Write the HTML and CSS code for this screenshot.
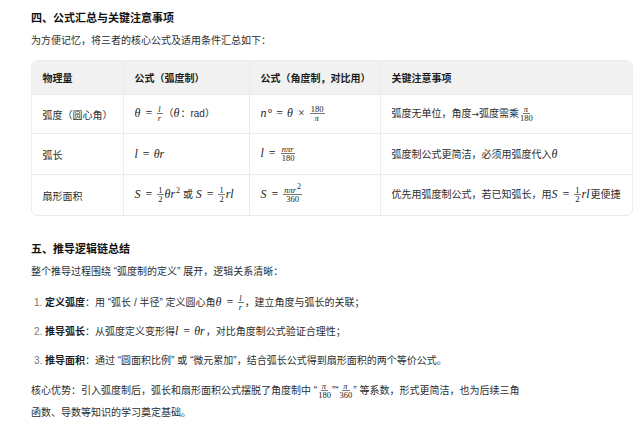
FILE: index.html
```html
<!DOCTYPE html>
<html lang="zh">
<head>
<meta charset="utf-8">
<title>公式汇总</title>
<link rel="stylesheet" href="styles.css">
</head>
<body>
<h3 class="h h1">四、公式汇总与关键注意事项</h3>
<p class="p intro">为方便记忆，将三者的核心公式及适用条件汇总如下：</p>
<div class="tablewrap">
<table class="tbl">
<colgroup><col class="c1"><col class="c2"><col class="c3"><col class="c4"></colgroup>
<thead>
<tr><th>物理量</th><th>公式（弧度制）</th><th>公式（角度制，对比用）</th><th>关键注意事项</th></tr>
</thead>
<tbody>
<tr class="r1">
<td>弧度（圆心角）</td>
<td><span class="m"><i>θ</i><span class="o">=</span><span class="f"><span class="n"><i>l</i></span><span class="d"><i>r</i></span></span></span>（<span class="m"><i>θ</i></span>：rad）</td>
<td><span class="m"><i>n</i>°<span class="o">=</span><i>θ</i><span class="o">×</span><span class="f"><span class="n">180</span><span class="d"><i>π</i></span></span></span></td>
<td>弧度无单位，角度<span class="arrow">→</span>弧度需乘<span class="m"><span class="f"><span class="n"><i>π</i></span><span class="d">180</span></span></span></td>
</tr>
<tr class="r2">
<td>弧长</td>
<td><span class="m"><i>l</i><span class="o">=</span><i>θr</i></span></td>
<td><span class="m"><i>l</i><span class="o">=</span><span class="f"><span class="n"><i>nπr</i></span><span class="d">180</span></span></span></td>
<td>弧度制公式更简洁，必须用弧度代入<span class="m"><i>θ</i></span></td>
</tr>
<tr class="r3">
<td>扇形面积</td>
<td><span class="m"><i>S</i><span class="o">=</span><span class="f"><span class="n">1</span><span class="d">2</span></span><i>θr</i><sup>2</sup></span> 或 <span class="m"><i>S</i><span class="o">=</span><span class="f"><span class="n">1</span><span class="d">2</span></span><i>rl</i></span></td>
<td><span class="m"><i>S</i><span class="o">=</span><span class="f"><span class="n"><i>nπr</i><sup>2</sup></span><span class="d">360</span></span></span></td>
<td>优先用弧度制公式，若已知弧长，用<span class="m"><i>S</i><span class="o">=</span><span class="f"><span class="n">1</span><span class="d">2</span></span><i>rl</i></span>更便捷</td>
</tr>
</tbody>
</table>
</div>
<h3 class="h h2">五、推导逻辑链总结</h3>
<p class="p intro2">整个推导过程围绕 “弧度制的定义” 展开，逻辑关系清晰：</p>
<ol class="list">
<li><b>定义弧度</b>：用 “弧长 / 半径” 定义圆心角<span class="m"><i>θ</i><span class="o">=</span><span class="f"><span class="n"><i>l</i></span><span class="d"><i>r</i></span></span></span>，建立角度与弧长的关联；</li>
<li><b>推导弧长</b>：从弧度定义变形得<span class="m"><i>l</i><span class="o">=</span><i>θr</i></span>，对比角度制公式验证合理性；</li>
<li><b>推导面积</b>：通过 “圆面积比例” 或 “微元累加”，结合弧长公式得到扇形面积的两个等价公式。</li>
</ol>
<p class="p core">核心优势：引入弧度制后，弧长和扇形面积公式摆脱了角度制中 <span class="q">“</span><span class="m"><span class="f"><span class="n"><i>π</i></span><span class="d">180</span></span></span><span class="q">”“</span><span class="m"><span class="f"><span class="n"><i>π</i></span><span class="d">360</span></span></span><span class="q">”</span> 等系数，形式更简洁，也为后续三角函数、导数等知识的学习奠定基础。</p>
</body>
</html>
```
FILE: styles.css
```css
html, body { margin: 0; padding: 0; background: #fff; }
body {
  width: 640px;
  height: 427px;
  overflow: hidden;
  box-sizing: border-box;
  padding: 11px 8px 0 31px;
  font-family: "Liberation Sans", "Noto Sans CJK SC", sans-serif;
  font-size: 10px;
  color: #2e2e2e;
}
.h { margin: 0; font-size: 11px; line-height: 14px; font-weight: 700; color: #111; }
.p { margin: 0; line-height: 20px; }
.intro { margin-top: 6px; }
.tablewrap {
  margin-top: 9px;
  border: 1px solid #ececec;
  border-radius: 7px;
  overflow: hidden;
  width: 600px;
}
.tbl { border-collapse: collapse; table-layout: fixed; width: 600px; }
.c1 { width: 91px; }
.c2 { width: 126px; }
.c3 { width: 131px; }
.c4 { width: 252px; }
th, td {
  padding: 0 0 0 11px;
  text-align: left;
  border-left: 1px solid #ececec;
  white-space: nowrap;
}
th:first-child, td:first-child { border-left: 0; padding-left: 10.5px; }
th { background: #f1f1f1; height: 32px; padding-bottom: 1px; font-weight: 700; color: #1c1c1c; box-sizing: content-box; }
td { border-top: 1px solid #ececec; }
.r1 td { height: 38px; }
.r2 td { height: 40px; }
.r3 td { height: 40px; }
.h2 { margin-top: 26px; }
.intro2 { margin-top: 6px; }
.list { margin: 6px 0 0; padding: 0 0 0 14px; }
.list li { line-height: 29px; }
.list li::marker { color: #777; }
.list b { color: #1c1c1c; }
.core { margin-top: 4px; width: 490px; line-height: 22px; }
.m { font-family: "Liberation Serif", serif; font-size: 12px; color: #222; white-space: nowrap; }
.m i { padding-right: 1px; }
.o { margin: 0 4px; font-style: normal; }
.m sup { font-size: 8px; line-height: 0; }
.arrow { font-family: "DejaVu Sans", sans-serif; font-size: 9px; }
.q { font-size: 10px; }
.f {
  display: inline-flex;
  flex-direction: column;
  align-items: center;
  vertical-align: middle;
  font-size: 8.5px;
  line-height: 9px;
  margin: 0 1px;
}
.f .n { border-bottom: 1px solid #777; padding: 0 1px; line-height: 8px; }
.f .d { line-height: 9px; }
```
